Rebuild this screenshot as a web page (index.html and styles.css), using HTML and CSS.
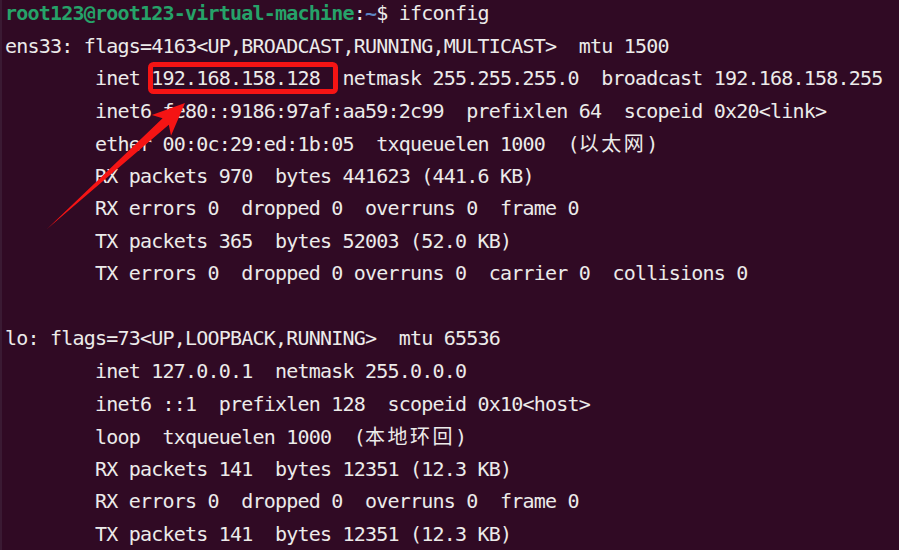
FILE: index.html
```html
<!DOCTYPE html>
<html>
<head>
<meta charset="utf-8">
<link rel="stylesheet" href="styles.css">
</head>
<body>
<div class="term">
<div class="line"><span class="user">root123@root123-virtual-machine</span>:<span class="path">~</span>$ ifconfig</div>
<div class="line">ens33: flags=4163&lt;UP,BROADCAST,RUNNING,MULTICAST&gt;  mtu 1500</div>
<div class="line">        inet 192.168.158.128  netmask 255.255.255.0  broadcast 192.168.158.255</div>
<div class="line">        inet6 fe80::9186:97af:aa59:2c99  prefixlen 64  scopeid 0x20&lt;link&gt;</div>
<div class="line">        ether 00:0c:29:ed:1b:05  txqueuelen 1000  (<span class="cjk">以太网</span>)</div>
<div class="line">        RX packets 970  bytes 441623 (441.6 KB)</div>
<div class="line">        RX errors 0  dropped 0  overruns 0  frame 0</div>
<div class="line">        TX packets 365  bytes 52003 (52.0 KB)</div>
<div class="line">        TX errors 0  dropped 0 overruns 0  carrier 0  collisions 0</div>
<div class="line"> </div>
<div class="line">lo: flags=73&lt;UP,LOOPBACK,RUNNING&gt;  mtu 65536</div>
<div class="line">        inet 127.0.0.1  netmask 255.0.0.0</div>
<div class="line">        inet6 ::1  prefixlen 128  scopeid 0x10&lt;host&gt;</div>
<div class="line">        loop  txqueuelen 1000  (<span class="cjk">本地环回</span>)</div>
<div class="line">        RX packets 141  bytes 12351 (12.3 KB)</div>
<div class="line">        RX errors 0  dropped 0  overruns 0  frame 0</div>
<div class="line">        TX packets 141  bytes 12351 (12.3 KB)</div>
</div>
<svg class="overlay" width="899" height="550" viewBox="0 0 899 550">
  <rect x="150.5" y="64.5" width="185" height="27" rx="3" ry="3" fill="none" stroke="#f51414" stroke-width="5"/>
  <polygon points="47,229 162.6,118.2 151.8,115.0 185,103 171.0,135.8 168.8,124.8" fill="#f51414"/>
</svg>
</body>
</html>
```
FILE: styles.css
```css
html, body {
  margin: 0;
  padding: 0;
  background: #300a24;
  width: 899px;
  height: 550px;
  overflow: hidden;
}
body {
  position: relative;
}
.term {
  display: flex;
  flex-direction: column;
  box-sizing: border-box;
  height: 560px;
  padding: 0 0 0 3px;
  margin-top: -3px;
  border-left: 2px solid #3a1a33;
  font-family: "DejaVu Sans Mono", "Liberation Mono", monospace;
  font-size: 20px;
  letter-spacing: -0.79px;
  color: #ecebea;
}
.line {
  white-space: pre;
  flex: none;
  height: 32.55px;
  line-height: 32.55px;
}
.user {
  color: #26a269;
  font-weight: bold;
}
.path {
  color: #5d86c4;
  font-weight: bold;
}
.cjk {
  font-family: "Noto Sans CJK SC", sans-serif;
  font-size: 20px;
  letter-spacing: 2.5px;
}
.overlay {
  position: absolute;
  left: 0;
  top: 0;
}
```
